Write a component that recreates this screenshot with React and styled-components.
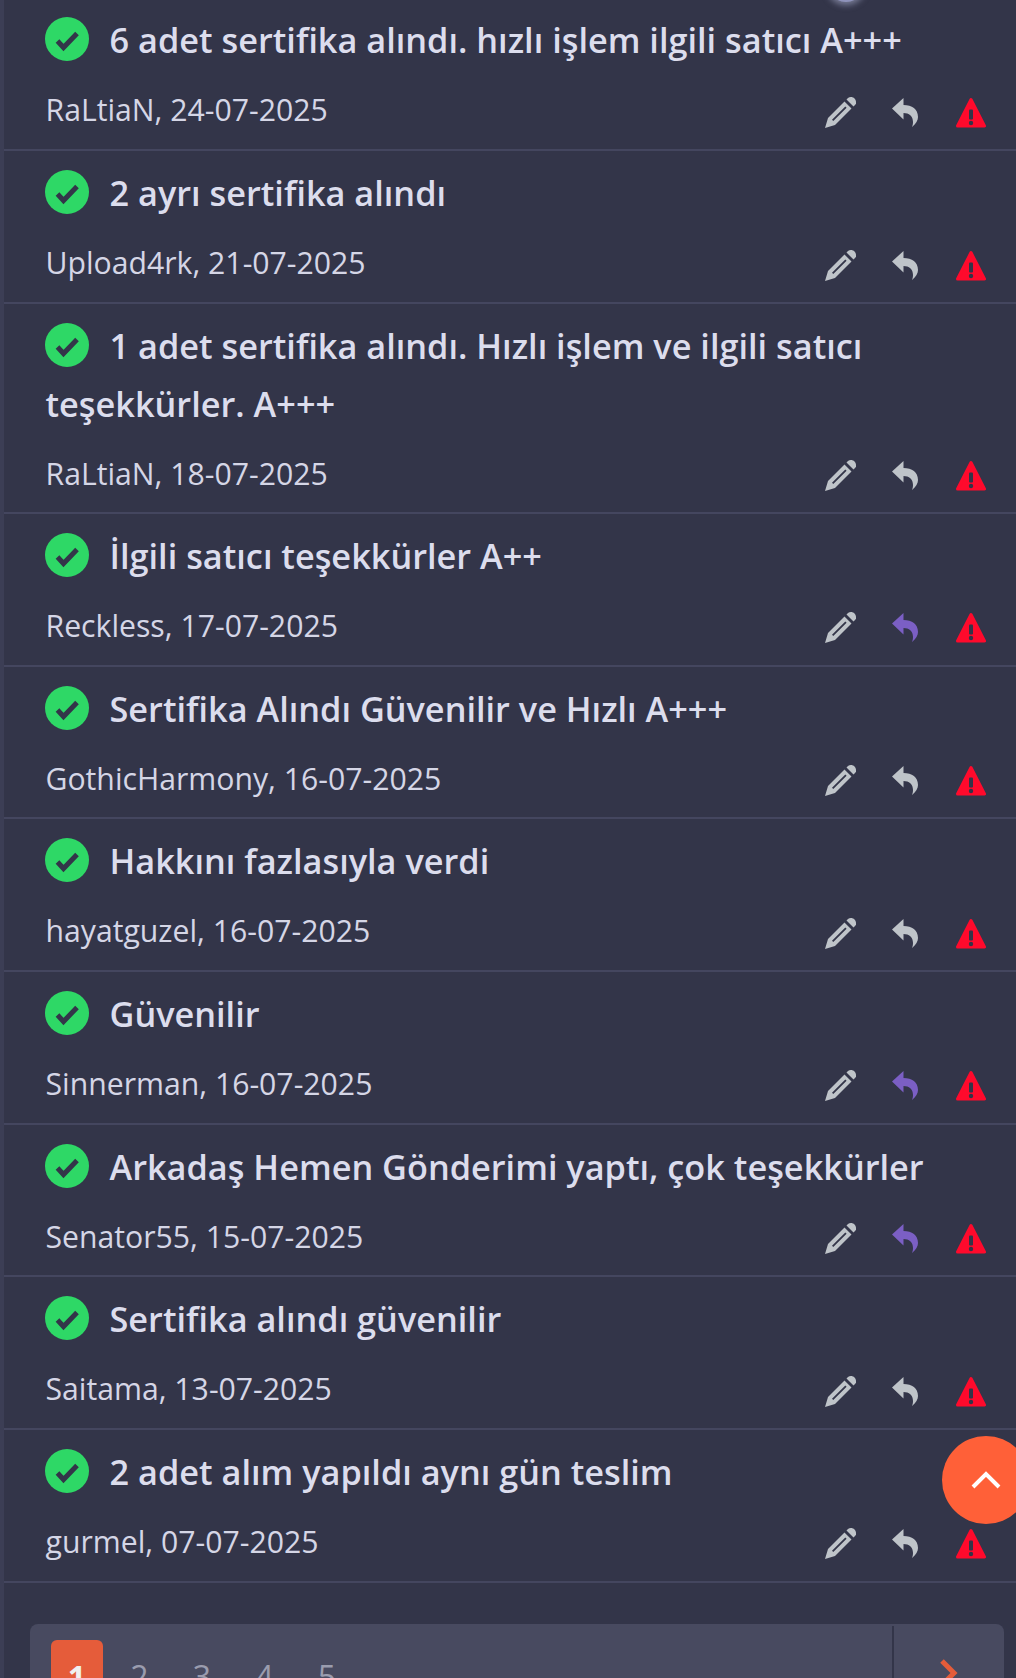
import React from 'react'
import styled, { createGlobalStyle } from 'styled-components'

const GlobalStyle = createGlobalStyle`
    html, body {
        margin: 0;
        padding: 0;
        background: #333549;
    }
`

const Page = styled.div`
    position: relative;
    width: 1016px;
    height: 1678px;
    overflow: hidden;
    box-sizing: border-box;
    background: #333549;
    border-left: 4px solid #3c3e55;
    font-family: "Open Sans", "Noto Sans", sans-serif;
`

const Glow = styled.div`
    position: absolute;
    left: 826px;
    top: -26px;
    width: 32px;
    height: 28px;
    border-radius: 50%;
    background: #8f93bb;
    box-shadow: 0 0 6px 3px rgba(190, 195, 230, 0.5);
`

const List = styled.div`
    display: flex;
    flex-direction: column;
`

const Row = styled.div`
    box-sizing: border-box;
    height: ${p => p.$tall ? 210 : 152.67}px;
    padding: 13px 0 0 41.5px;
    border-bottom: 2px solid #44465f;
    &:first-child {
        height: 151.3px;
        padding-top: 11px;
    }
`

const Title = styled.div`
    font-size: 34.3px;
    line-height: 58px;
    font-weight: 600;
    color: #dcdded;
`

const CheckIcon = styled.svg`
    display: inline-block;
    width: 44px;
    height: 44px;
    margin: 0 21px 0 -1px;
    vertical-align: -8px;
`

const Meta = styled.div`
    display: flex;
    align-items: center;
    justify-content: space-between;
    margin-top: 21px;
`

const Author = styled.div`
    font-size: 30.2px;
    line-height: 40px;
    color: #d5d6e6;
`

const Actions = styled.div`
    display: flex;
    align-items: center;
    gap: 36px;
    margin: 4px 30px 0 0;
`

const Icon = styled.svg`
    display: block;
    height: 31px;
    width: ${p => p.$w}px;
    fill: ${p => p.$color};
`

const WarnIcon = styled(Icon)`
    margin-left: 2px;
`

const Pager = styled.div`
    display: flex;
    margin: 41px 12px 0 26px;
    height: 140px;
    background: #484a60;
    border-radius: 8px;
`

const Pages = styled.div`
    flex: 1;
    display: flex;
    gap: 10.5px;
    padding: 16px 0 0 21px;
`

const PageNum = styled.div`
    width: 52px;
    height: 80px;
    box-sizing: border-box;
    padding-top: 12px;
    border-radius: 6px;
    text-align: center;
    font-size: 32px;
    line-height: 50px;
    font-weight: ${p => p.$active ? 700 : 400};
    color: ${p => p.$active ? '#f0f0f0' : '#9a9cae'};
    background: ${p => p.$active ? '#e55c3a' : 'transparent'};
`

const NextCell = styled.div`
    width: 110px;
    margin-top: 2px;
    padding-top: 32px;
    display: flex;
    justify-content: center;
    border-left: 2px solid #333549;
`

const ToTop = styled.div`
    position: absolute;
    left: 938px;
    top: 1436px;
    width: 88px;
    height: 88px;
    border-radius: 50%;
    background: #ff6038;
    display: flex;
    align-items: center;
    justify-content: center;
`

const items = [
    ['6 adet sertifika alındı. hızlı işlem ilgili satıcı A+++', 'RaLtiaN, 24-07-2025'],
    ['2 ayrı sertifika alındı', 'Upload4rk, 21-07-2025'],
    ['1 adet sertifika alındı. Hızlı işlem ve ilgili satıcı teşekkürler. A+++', 'RaLtiaN, 18-07-2025', false, true],
    ['İlgili satıcı teşekkürler A++', 'Reckless, 17-07-2025', true],
    ['Sertifika Alındı Güvenilir ve Hızlı A+++', 'GothicHarmony, 16-07-2025'],
    ['Hakkını fazlasıyla verdi', 'hayatguzel, 16-07-2025'],
    ['Güvenilir', 'Sinnerman, 16-07-2025', true],
    ['Arkadaş Hemen Gönderimi yaptı, çok teşekkürler', 'Senator55, 15-07-2025', true],
    ['Sertifika alındı güvenilir', 'Saitama, 13-07-2025'],
    ['2 adet alım yapıldı aynı gün teslim', 'gurmel, 07-07-2025'],
]

const Check = () => (
    <CheckIcon viewBox="0 0 44 44">
        <circle cx="22" cy="22" r="22" fill="#2ed866" />
        <path d="M12.500 24l6 6.500L32 16.500" fill="none" stroke="#333549" strokeWidth="5" />
    </CheckIcon>
)

const Pencil = () => (
    <Icon $w={31} $color="#bfc4c9" viewBox="0 0 31 31">
        <path d="M21.500 2.500L23 1c2-1.500 5-1 6.500.5S32 6 30 8l-1.500 1.500z" />
        <path fillRule="evenodd" d="M19.500 4.500l7 7L10 28 0 31l3-10zM20.300 9.500L7 22.800l1.300 1.300L21.600 10.800z" />
    </Icon>
)

const Reply = ({ on }) => (
    <Icon $w={26} $color={on ? '#7b5fc4' : '#bfc4c9'} viewBox="0 0 26 29">
        <path d="M11.500 0L0 10.500l11.500 11V15C17 15 21 18 21 24c0 2-.5 4-1 5 4-3 6-7 6-10 0-8-6-12-14.500-12z" />
    </Icon>
)

const Warn = () => (
    <WarnIcon $w={30} $color="#ff0a2c" viewBox="0 0 30 31">
        <path d="M15 2.500L28.500 29h-27z" stroke="#ff0a2c" strokeWidth="3" strokeLinejoin="round" />
        <rect x="13" y="12.500" width="4" height="10" rx="1" fill="#333549" />
        <circle cx="15" cy="26" r="2.200" fill="#333549" />
    </WarnIcon>
)

const App = () => (
    <Page>
        <GlobalStyle />
        <Glow />
        <List>
            {items.map(([title, author, replied, tall]) => (
                <Row key={author} $tall={tall}>
                    <Title><Check />{title}</Title>
                    <Meta>
                        <Author>{author}</Author>
                        <Actions>
                            <Pencil />
                            <Reply on={replied} />
                            <Warn />
                        </Actions>
                    </Meta>
                </Row>
            ))}
        </List>
        <Pager>
            <Pages>
                <PageNum $active>1</PageNum>
                <PageNum>2</PageNum>
                <PageNum>3</PageNum>
                <PageNum>4</PageNum>
                <PageNum>5</PageNum>
            </Pages>
            <NextCell>
                <svg width="20" height="30" viewBox="0 0 20 30">
                    <path d="M3 3l12 12L3 27" fill="none" stroke="#e55c3a" strokeWidth="5" />
                </svg>
            </NextCell>
        </Pager>
        <ToTop>
            <svg width="32" height="20" viewBox="0 0 32 20">
                <path d="M3 17L16 4l13 13" fill="none" stroke="#fff" strokeWidth="4" />
            </svg>
        </ToTop>
    </Page>
)

export default App
